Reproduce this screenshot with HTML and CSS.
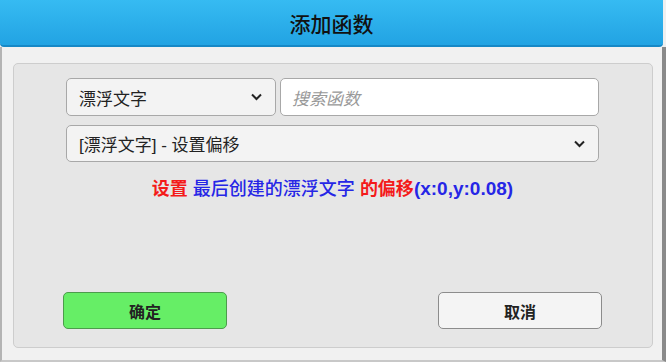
FILE: index.html
```html
<!DOCTYPE html>
<html lang="zh">
<head>
<meta charset="utf-8">
<link rel="stylesheet" href="styles.css">
</head>
<body>
<div class="dialog">
  <div class="header">添加函数</div>
  <div class="body">
    <div class="panel">
      <div class="row1">
        <div class="select small">
          <span>漂浮文字</span>
          <svg class="chev" width="13" height="8" viewBox="0 0 13 8"><path d="M2 1.5 L6.5 6 L11 1.5" fill="none" stroke="#222" stroke-width="2"/></svg>
        </div>
        <div class="input">搜索函数</div>
      </div>
      <div class="select wide">
        <span>[漂浮文字] - 设置偏移</span>
        <svg class="chev" width="13" height="8" viewBox="0 0 13 8"><path d="M2 1.5 L6.5 6 L11 1.5" fill="none" stroke="#222" stroke-width="2"/></svg>
      </div>
      <div class="desc"><span class="red">设置</span> <span class="blue">最后创建的漂浮文字</span> <span class="red">的偏移</span><span class="blue bold">(x:0,y:0.08)</span></div>
      <div class="buttons">
        <div class="btn ok">确定</div>
        <div class="btn cancel">取消</div>
      </div>
    </div>
  </div>
</div>
</body>
</html>
```
FILE: styles.css
```css
html, body {
  margin: 0;
  padding: 0;
  width: 666px;
  height: 362px;
  overflow: hidden;
  background: #f0f0f0;
  font-family: "Liberation Sans", "Noto Sans CJK SC", sans-serif;
}
.dialog {
  width: 666px;
  height: 362px;
  display: flex;
  flex-direction: column;
}
.header {
  height: 45px;
  margin-right: 3px;
  background: linear-gradient(#36bbf2, #22a3e3);
  border-bottom: 2px solid #1688c6;
  border-radius: 0 0 4px 4px;
  display: flex;
  align-items: center;
  justify-content: center;
  font-size: 21px;
  font-weight: 500;
  color: #111;
  font-family: "Noto Sans CJK SC", sans-serif;
}
.body {
  flex: 1;
  background: #f1f1f1;
  border-left: 2px solid #b4b4b4;
  border-right: 4px solid #8a8a8a;
  border-bottom: 2px solid #c8c8c8;
  padding: 16px 9px 12px 11px;
  display: flex;
}
.panel {
  flex: 1;
  background: #e6e6e6;
  border: 1px solid #cdcdcd;
  border-radius: 5px;
  padding: 14px 53px 0 52px;
  display: flex;
  flex-direction: column;
}
.row1 {
  display: flex;
  gap: 4px;
  height: 38px;
}
.select {
  background: #f3f3f3;
  border: 1px solid #a8a8a8;
  border-radius: 5px;
  box-sizing: border-box;
  display: flex;
  align-items: center;
  justify-content: space-between;
  padding: 0 12px 0 12px;
  font-size: 17px;
  color: #222;
}
.select.small {
  width: 210px;
}
.select.wide {
  margin-top: 9px;
  height: 37px;
}
.chev {
  display: block;
}
.input {
  flex: 1;
  background: #fff;
  border: 1px solid #a8a8a8;
  border-radius: 5px;
  display: flex;
  align-items: center;
  padding-left: 11px;
  font-size: 17px;
  font-style: italic;
  color: #999;
}
.desc {
  margin-top: 15px;
  height: 24px;
  line-height: 24px;
  text-align: center;
  font-size: 18px;
}
.red { color: #f41a1a; font-weight: bold; }
.blue { color: #2626e6; font-weight: 500; }
.blue.bold { font-weight: bold; font-size: 19px; }
.buttons {
  margin-top: 91px;
  margin-left: -3px;
  margin-right: -3px;
  display: flex;
  justify-content: space-between;
}
.btn {
  width: 164px;
  height: 37px;
  box-sizing: border-box;
  border-radius: 5px;
  display: flex;
  align-items: center;
  justify-content: center;
  font-size: 16px;
  font-weight: bold;
  color: #222;
}
.ok {
  background: #66ee66;
  border: 1px solid #4c9c4c;
}
.cancel {
  background: #f4f4f4;
  border: 1px solid #8c8c8c;
}
```
